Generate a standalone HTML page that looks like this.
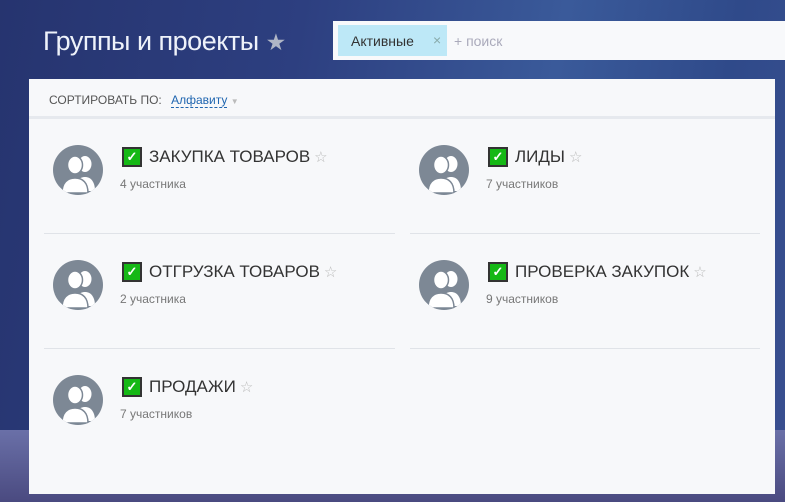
<!DOCTYPE html>
<html><head><meta charset="utf-8"><style>
*{margin:0;padding:0;box-sizing:border-box}
body{width:785px;height:502px;overflow:hidden;font-family:"Liberation Sans",sans-serif;background:linear-gradient(100deg,#26346f 0%,#2d3f80 35%,#3a5a9a 65%,#2f4a8a 85%,#3a4f90 100%);position:relative}
.bottom{position:absolute;left:0;right:0;top:430px;bottom:0;background:linear-gradient(180deg,#6a70a8,#4a4a80)}
.title{position:absolute;left:43px;top:26px;color:#eef2fa;font-size:27px;letter-spacing:-0.5px}
.title span{color:#b0b6c6;font-size:23px}
.search{position:absolute;left:333px;top:21px;width:452px;height:39px;background:#f8f9fb}
.tag{position:absolute;left:5px;top:4px;width:109px;height:31px;background:#bde8f7;font-size:14px;color:#333;padding:8px 0 0 13px}
.tag i{position:absolute;left:95px;top:7px;font-style:normal;color:#8aa;font-size:14px}
.ph{position:absolute;left:121px;top:12px;font-size:14px;color:#aab}
.panel{position:absolute;left:29px;top:79px;width:746px;height:415px;background:#f7f8fa}
.sort{position:absolute;left:20px;top:14px;font-size:12px;color:#555}
.sort b{font-weight:normal;color:#2066b0;border-bottom:1px dashed #2066b0;margin-left:6px}
.sort em{font-style:normal;color:#bbb;font-size:8px}
.line{position:absolute;left:0;right:0;top:37px;height:3px;background:#e6e9ee}
.item{position:absolute;width:351px}
.av{position:absolute;left:9px;top:12px;width:50px;height:50px;border-radius:50%;background:#7d8895;overflow:hidden}
.cb{position:absolute;left:78px;top:14px;width:20px;height:20px;background:#15b815;border:2px solid #333;color:#fff;font-size:13px;line-height:16px;text-align:center;font-weight:bold}
.nm{position:absolute;left:105px;top:14px;font-size:17px;color:#333;white-space:nowrap}
.nm span{color:#bbb;font-size:15px;margin-left:4px}
.sub{position:absolute;left:76px;top:44px;font-size:12px;color:#777}
.sep{position:absolute;height:1px;background:#e0e3e8}
</style></head><body>
<div class="bottom"></div>
<div class="title">Группы и проекты <span>★</span></div>
<div class="search"><div class="tag">Активные<i>×</i></div><div class="ph">+ поиск</div></div>
<div class="panel">
<div class="sort">СОРТИРОВАТЬ ПО: <b>Алфавиту</b> <em>▼</em></div>
<div class="line"></div>
</div>
<svg width="0" height="0" style="position:absolute"><defs><g id="ppl" fill="#fff"><ellipse cx="32" cy="19" rx="6.5" ry="8"/><path d="M22 46c0-9 4-14 10-14s10 5 10 14z"/><ellipse cx="22" cy="20" rx="7.5" ry="9" stroke="#7d8895" stroke-width="1.5"/><path d="M9 48c0-10 5-15 13-15s13 5 13 15z" stroke="#7d8895" stroke-width="1.5"/></g></defs></svg>

<div class="item" style="left:44px;top:133px"><div class="av"><svg width="50" height="50"><use href="#ppl"/></svg></div><div class="cb">✓</div><div class="nm">ЗАКУПКА ТОВАРОВ<span>☆</span></div><div class="sub">4 участника</div></div>
<div class="item" style="left:410px;top:133px"><div class="av"><svg width="50" height="50"><use href="#ppl"/></svg></div><div class="cb">✓</div><div class="nm">ЛИДЫ<span>☆</span></div><div class="sub">7 участников</div></div>
<div class="sep" style="left:44px;top:233px;width:351px"></div>
<div class="sep" style="left:410px;top:233px;width:350px"></div>
<div class="item" style="left:44px;top:248px"><div class="av"><svg width="50" height="50"><use href="#ppl"/></svg></div><div class="cb">✓</div><div class="nm">ОТГРУЗКА ТОВАРОВ<span>☆</span></div><div class="sub">2 участника</div></div>
<div class="item" style="left:410px;top:248px"><div class="av"><svg width="50" height="50"><use href="#ppl"/></svg></div><div class="cb">✓</div><div class="nm">ПРОВЕРКА ЗАКУПОК<span>☆</span></div><div class="sub">9 участников</div></div>
<div class="sep" style="left:44px;top:348px;width:351px"></div>
<div class="sep" style="left:410px;top:348px;width:350px"></div>
<div class="item" style="left:44px;top:363px"><div class="av"><svg width="50" height="50"><use href="#ppl"/></svg></div><div class="cb">✓</div><div class="nm">ПРОДАЖИ<span>☆</span></div><div class="sub">7 участников</div></div>
</body></html>
